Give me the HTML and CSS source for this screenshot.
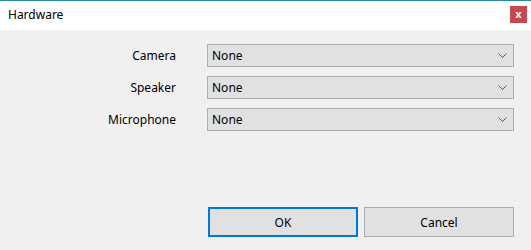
FILE: index.html
```html
<!DOCTYPE html>
<html>
<head>
    <title>Hardware</title>
    <meta charset="UTF-8">
    <link rel="stylesheet" href="styles.css">
</head>
<body>
    <div class="titlebar">
        <span class="title">Hardware</span>
        <span class="close">x</span>
    </div>

    <div class="content">
        <div class="form">
            <label>Camera</label>
            <div class="combo">
                <span>None</span>
                <svg width="9" height="5" viewBox="0 0 9 5"><path d="M0.5 0.5 L4.5 4.5 L8.5 0.5" fill="none" stroke="#555" stroke-width="1"/></svg>
            </div>

            <label>Speaker</label>
            <div class="combo">
                <span>None</span>
                <svg width="9" height="5" viewBox="0 0 9 5"><path d="M0.5 0.5 L4.5 4.5 L8.5 0.5" fill="none" stroke="#555" stroke-width="1"/></svg>
            </div>

            <label>Microphone</label>
            <div class="combo">
                <span>None</span>
                <svg width="9" height="5" viewBox="0 0 9 5"><path d="M0.5 0.5 L4.5 4.5 L8.5 0.5" fill="none" stroke="#555" stroke-width="1"/></svg>
            </div>
        </div>

        <div class="buttons">
            <button class="btn default">OK</button>
            <button class="btn">Cancel</button>
        </div>
    </div>
</body>
</html>
```

FILE: styles.css
```css
body {
    margin: 0;
    background: #f0f0f0;
    font-family: "Noto Sans", "Liberation Sans", Arial, sans-serif;
    font-size: 12px;
    color: #000;
}

.titlebar {
    height: 30px;
    box-sizing: border-box;
    border-top: 1px solid #2b8ca6;
    background: #ffffff;
    display: flex;
    align-items: center;
    justify-content: space-between;
    padding: 0 4px 2px 8px;
}

.title {
    font-size: 12px;
}

.close {
    width: 17px;
    height: 17px;
    background: #c7484d;
    color: #fff;
    font-size: 11px;
    font-weight: bold;
    line-height: 15px;
    text-align: center;
}

.content {
    padding-top: 14px;
}

.form {
    display: grid;
    grid-template-columns: 176px 307px;
    column-gap: 31px;
    row-gap: 9px;
    align-items: center;
}

.form label {
    text-align: right;
}

.combo {
    height: 23px;
    box-sizing: border-box;
    border: 1px solid #adadad;
    background: #e1e1e1;
    display: flex;
    align-items: center;
    justify-content: space-between;
    padding: 0 6px 0 4px;
}

.buttons {
    display: flex;
    gap: 6px;
    margin: 76px 0 0 208px;
}

.btn {
    width: 150px;
    height: 30px;
    box-sizing: border-box;
    border: 1px solid #adadad;
    background: #e1e1e1;
    font-family: inherit;
    font-size: 12px;
    color: #000;
    padding: 0;
}

.btn.default {
    border: 2px solid #0078d7;
}
```
